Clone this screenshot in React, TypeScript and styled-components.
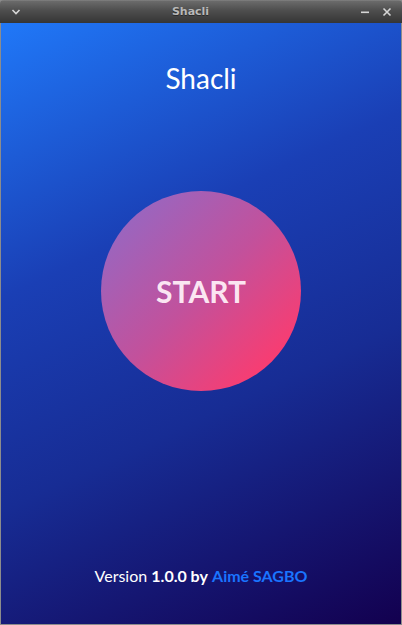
import React from 'react';
import styled, { createGlobalStyle } from 'styled-components';

const GlobalStyle = createGlobalStyle`
    html, body {
        margin: 0;
        padding: 0;
        height: 100%;
        overflow: hidden;
    }

    #root {
        height: 100%;
    }
`;

const Window = styled.div`
    display: flex;
    flex-direction: column;
    width: 402px;
    height: 625px;
    box-sizing: border-box;
    background: #8c8c8c;
    font-family: Lato, 'Noto Sans', sans-serif;
`;

const TitleBar = styled.div`
    display: flex;
    align-items: center;
    height: 23px;
    flex-shrink: 0;
    padding: 0 8px 0 9px;
    background: linear-gradient(#8a8a8a 0, #6b6b6b 1px, #4f4f4f 10px, #353535 23px);
    border-radius: 4px 4px 0 0;
    box-sizing: border-box;
`;

const TitleText = styled.div`
    flex: 1;
    text-align: center;
    font-family: 'DejaVu Sans', sans-serif;
    font-weight: bold;
    font-size: 11px;
    color: #b9b9b9;
    text-shadow: 0 1px 0 #2a2a2a;
`;

const TitleButton = styled.div<{ $gap?: number }>`
    display: flex;
    align-items: center;
    justify-content: center;
    width: 14px;
    height: 14px;
    margin-left: ${(p) => p.$gap || 0}px;
`;

const Content = styled.div`
    flex: 1;
    display: flex;
    flex-direction: column;
    align-items: center;
    margin: 0 1px 1px;
    background: linear-gradient(155deg, #2078f8 0%, #1a3fb5 35%, #172c94 62%, #13004f 100%);
`;

const AppTitle = styled.h1`
    margin: 38px 0 0;
    font-size: 28px;
    font-weight: 400;
    color: #ffffff;
    line-height: 34px;
`;

const StartButton = styled.button`
    display: flex;
    align-items: center;
    justify-content: center;
    width: 200px;
    height: 200px;
    margin-top: 96px;
    border: none;
    border-radius: 50%;
    background: linear-gradient(135deg, #8b6dcc 0%, #c2519c 50%, #ff3a6c 90%);
    color: rgba(255, 240, 248, 0.95);
    font-family: Lato, 'Noto Sans', sans-serif;
    font-weight: 700;
    font-size: 30px;
    cursor: pointer;
    padding: 0;

    &:focus {
        outline: none;
    }
`;

const Footer = styled.p`
    margin: auto 0 39px;
    font-size: 16px;
    color: #ffffff;
    line-height: 19px;
`;

const Strong = styled.span<{ $accent?: boolean }>`
    font-weight: 700;
    color: ${(p) => (p.$accent ? '#1a74ff' : '#ffffff')};
`;

const App: React.FC = () => {
    return (
        <>
            <GlobalStyle />
            <Window>
                <TitleBar>
                    <TitleButton>
                        <svg width="10" height="8" viewBox="0 0 10 8">
                            <path d="M1.5 2 L5 5.5 L8.5 2" fill="none" stroke="#d6d6d6" strokeWidth="1.6" />
                        </svg>
                    </TitleButton>
                    <TitleText>Shacli</TitleText>
                    <TitleButton>
                        <svg width="10" height="10" viewBox="0 0 10 10">
                            <rect x="1" y="4.5" width="8" height="1.6" fill="#d6d6d6" />
                        </svg>
                    </TitleButton>
                    <TitleButton $gap={8}>
                        <svg width="10" height="10" viewBox="0 0 10 10">
                            <path d="M1.5 1.5 L8.5 8.5 M8.5 1.5 L1.5 8.5" stroke="#d6d6d6" strokeWidth="1.6" />
                        </svg>
                    </TitleButton>
                </TitleBar>
                <Content>
                    <AppTitle>Shacli</AppTitle>
                    <StartButton>START</StartButton>
                    <Footer>
                        Version <Strong>1.0.0 by</Strong> <Strong $accent>Aimé SAGBO</Strong>
                    </Footer>
                </Content>
            </Window>
        </>
    );
};

export default App;
